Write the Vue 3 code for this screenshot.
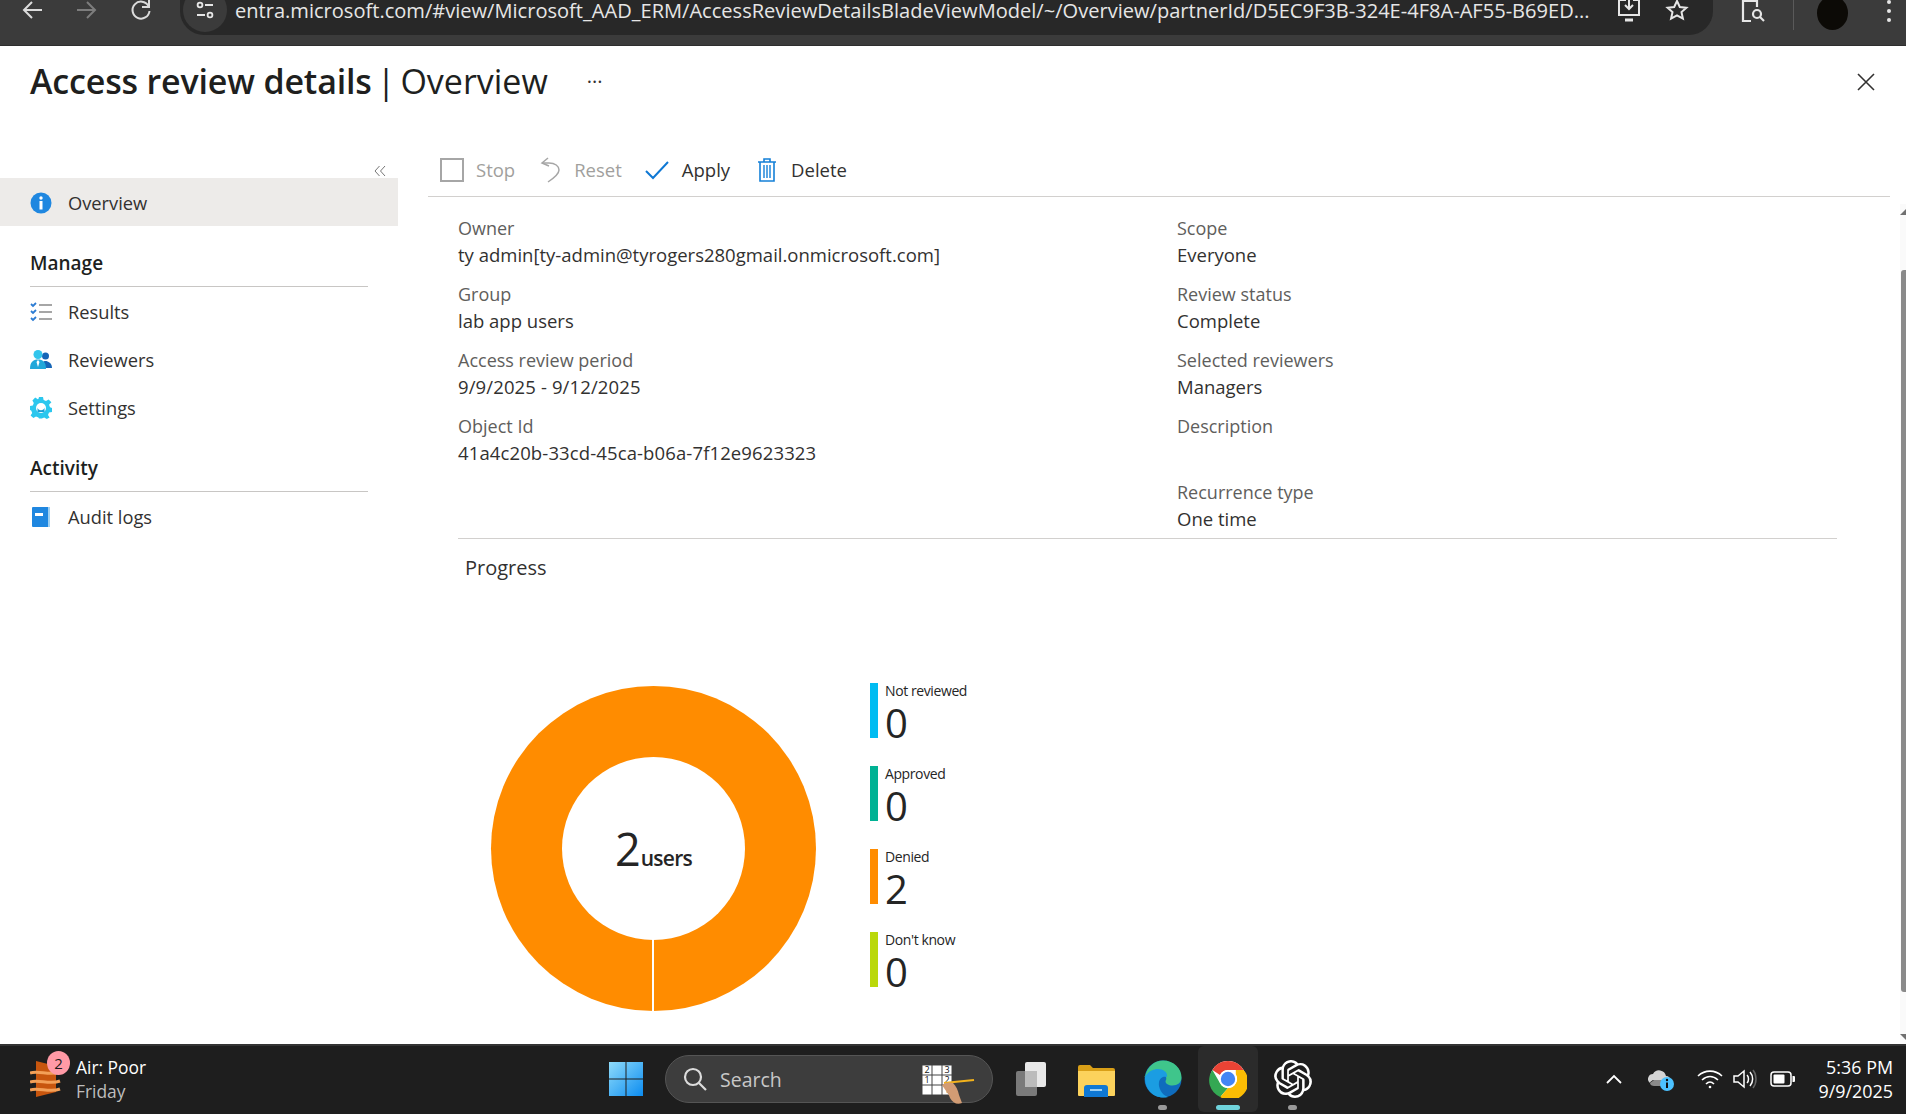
<script setup>
const leftDetails = [
  { label: "Owner", value: "ty admin[ty-admin@tyrogers280gmail.onmicrosoft.com]" },
  { label: "Group", value: "lab app users" },
  { label: "Access review period", value: "9/9/2025 - 9/12/2025", digits: true },
  { label: "Object Id", value: "41a4c20b-33cd-45ca-b06a-7f12e9623323", digits: true },
];
const rightDetails = [
  { label: "Scope", value: "Everyone" },
  { label: "Review status", value: "Complete" },
  { label: "Selected reviewers", value: "Managers" },
  { label: "Description", value: "" },
  { label: "Recurrence type", value: "One time" },
];
const legend = [
  { label: "Not reviewed", value: 0, color: "#00bcf2" },
  { label: "Approved", value: 0, color: "#00b294" },
  { label: "Denied", value: 2, color: "#ff8c00" },
  { label: "Don't know", value: 0, color: "#bad80a" },
];
</script>

<template>
  <div class="page">
    <!-- browser toolbar -->
    <div class="chrome">
      <div class="chrome-row">
        <svg class="nav nav-back" width="24" height="24" viewBox="0 0 24 24" fill="none" stroke="#dcdcdc" stroke-width="2"><path d="M21 12H4M11 4l-8 8 8 8" /></svg>
        <svg class="nav nav-fwd" width="24" height="24" viewBox="0 0 24 24" fill="none" stroke="#7d7d7d" stroke-width="2"><path d="M3 12h17M13 4l8 8-8 8" /></svg>
        <svg class="nav nav-reload" width="24" height="24" viewBox="0 0 24 24" fill="none" stroke="#dcdcdc" stroke-width="2"><path d="M19.5 8A8.5 8.5 0 1 0 20.5 13" /><path d="M20 2v7h-7" /></svg>
        <div class="url-pill">
          <span class="tune">
            <svg width="22" height="22" viewBox="0 0 22 22" fill="none" stroke="#e6e6e6" stroke-width="1.8"><circle cx="6" cy="6" r="2.4" /><path d="M11 6h8M3 16h8" /><circle cx="16" cy="16" r="2.4" /></svg>
          </span>
          <span class="url">entra.microsoft.com/#view/Microsoft_AAD_ERM/AccessReviewDetailsBladeViewModel/~/Overview/partnerId/D5EC9F3B-324E-4F8A-AF55-B69ED...</span>
          <svg class="pill-cast" width="26" height="26" viewBox="0 0 26 26" fill="none" stroke="#e6e6e6" stroke-width="2"><path d="M10 3H3v15h20V3h-6M13 1v10M9 8l4 4 4-4" /><path d="M9 23h8" stroke-width="3" /></svg>
          <svg class="pill-star" width="24" height="24" viewBox="0 0 24 24" fill="none" stroke="#e6e6e6" stroke-width="2"><path d="M12 3l2.8 6 6.6.7-4.9 4.4 1.4 6.5L12 17.3l-5.900 3.300 1.400-6.500L2.600 9.700l6.600-.7z" /></svg>
        </div>
        <svg class="lens" width="28" height="28" viewBox="0 0 28 28" fill="none" stroke="#e6e6e6" stroke-width="2.200"><path d="M4 2v22h8M4 4h14v6" /><circle cx="18" cy="17" r="4" /><path d="M21 20l4 4" /></svg>
        <span class="chrome-sep"></span>
        <span class="avatar"></span>
        <span class="dots"><i></i><i></i><i></i></span>
      </div>
    </div>

    <div class="blade">
      <div class="blade-head">
        <h1 class="title"><b>Access review details</b><span class="pipe">|</span>Overview</h1>
        <span class="more">···</span>
        <svg class="close" width="20" height="20" viewBox="0 0 20 20" fill="none" stroke="#323130" stroke-width="1.600"><path d="M2 2l16 16M18 2L2 18" /></svg>
      </div>

      <div class="blade-body">
        <aside class="side">
          <div class="collapse">
            <svg width="14" height="14" viewBox="0 0 14 14" fill="none" stroke="#777" stroke-width="1"><path d="M6.500 2L2 7l4.500 5M12 2L7.500 7l4.500 5" /></svg>
          </div>
          <div class="nav-item active">
            <svg width="22" height="22" viewBox="0 0 22 22"><circle cx="11" cy="11" r="10.500" fill="#1f87e0" /><circle cx="11" cy="6" r="1.700" fill="#fff" /><rect x="9.500" y="9" width="3" height="8.500" fill="#fff" /></svg>
            <span>Overview</span>
          </div>

          <div class="group-title">Manage</div>
          <div class="nav-item">
            <svg width="22" height="22" viewBox="0 0 22 22" fill="none"><path d="M1 3l2 2 3-3M1 10l2 2 3-3M1 17l2 2 3-3" stroke="#2c7cd3" stroke-width="1.800" /><path d="M9 4h13M9 11h13M9 18h13" stroke="#a6a6a6" stroke-width="2" /></svg>
            <span>Results</span>
          </div>
          <div class="nav-item">
            <svg width="22" height="22" viewBox="0 0 22 22"><circle cx="15.500" cy="7" r="3.500" fill="#1565b7" /><path d="M11 19c0-5 2-7 4.500-7S22 14 22 19z" fill="#1565b7" /><circle cx="8" cy="5.500" r="4.500" fill="#32c5ec" /><path d="M0 20c0-7 3-9.500 8-9.500s8 2.500 8 9.500z" fill="#20a7da" /><path d="M8 11l-1.500 2L8 18l1.500-5z" fill="#fff" /></svg>
            <span>Reviewers</span>
          </div>
          <div class="nav-item">
            <svg width="22" height="22" viewBox="0 0 22 22"><path d="M9 0h4l.6 3 2.400 1 2.600-1.600 2.800 2.800L19 7.800l1 2.400 2 .8v4l-3 .6-1 2.400 1.600 2.600-2.800 1.400-2.600-1.600-2.400 1H9l-.6-1-2.400-1-2.600 1.600L.6 18.600 2.200 16l-1-2.400L0 13V9l2.800-.6 1-2.400L2.400 3.400 5.200.600 7.800 2.200 8.400 2z" fill="#2bc7ee" /><circle cx="11" cy="11" r="5" fill="#fff" /><path d="M7.500 10.500a3.600 3.600 0 0 0 7 0V15h-7z" fill="#1d9fd6" /></svg>
            <span>Settings</span>
          </div>

          <div class="group-title activity">Activity</div>
          <div class="nav-item">
            <svg width="22" height="22" viewBox="0 0 22 22"><rect x="2" y="1" width="18" height="20" rx="1" fill="#1f87e0" /><rect x="18" y="1" width="2" height="20" fill="#9fd0f2" /><rect x="5" y="7" width="8" height="3" fill="#fff" /></svg>
            <span>Audit logs</span>
          </div>
        </aside>

        <main class="content">
          <div class="toolbar">
            <button class="tool off">
              <span class="stop-box"></span>
              <span>Stop</span>
            </button>
            <button class="tool off reset">
              <svg width="24" height="28" viewBox="0 0 24 28" fill="none" stroke="#a6a6a6" stroke-width="1.500"><path d="M9 2L3 7l7 3" /><path d="M3 7h7c6 0 10 3 10 7s-5 8-11 12" /></svg>
              <span>Reset</span>
            </button>
            <button class="tool apply">
              <svg width="26" height="22" viewBox="0 0 26 22" fill="none" stroke="#0f78d4" stroke-width="2"><path d="M2 12l7 7L24 3" /></svg>
              <span>Apply</span>
            </button>
            <button class="tool delete">
              <svg width="20" height="26" viewBox="0 0 20 26" fill="none" stroke="#1480d8" stroke-width="1.600"><path d="M1 5h18M7 5V2h6v3M3 5v19h14V5" /><path d="M7 8v13M10 8v13M13 8v13" stroke-width="1.400" /></svg>
              <span>Delete</span>
            </button>
          </div>

          <div class="details">
            <div class="col">
              <div v-for="d in leftDetails" :key="d.label" class="field">
                <div class="label">{{ d.label }}</div>
                <div :class="['value', { digits: d.digits }]">{{ d.value }}</div>
              </div>
            </div>
            <div class="col">
              <div v-for="d in rightDetails" :key="d.label" class="field">
                <div class="label">{{ d.label }}</div>
                <div class="value">{{ d.value }}</div>
              </div>
            </div>
          </div>

          <div class="progress-title">Progress</div>

          <div class="chart-row">
            <div class="donut">
              <span class="gap-line"></span>
              <div class="hole">
                <div class="count"><span class="num">2</span><span class="unit">users</span></div>
              </div>
            </div>
            <div class="legend">
              <div v-for="l in legend" :key="l.label" class="legend-item">
                <span class="bar" :style="{ background: l.color }"></span>
                <div>
                  <div class="l-label">{{ l.label }}</div>
                  <div class="l-value">{{ l.value }}</div>
                </div>
              </div>
            </div>
          </div>
        </main>
      </div>

      <div class="scrollbar">
        <span class="arrow up"></span>
        <span class="thumb"></span>
        <span class="arrow down"></span>
      </div>
    </div>

    <!-- windows taskbar -->
    <footer class="taskbar">
      <div class="weather">
        <span class="weather-icon">
          <svg width="34" height="40" viewBox="0 0 34 40"><path d="M6 2l20 5v26L6 38z" fill="#c8560e" /><path d="M0 14c8-3 20 3 30-1M0 23c8-3 20 3 30-1M0 31c8-3 20 3 30-1" fill="none" stroke="#f3a058" stroke-width="3" /></svg>
          <span class="badge">2</span>
        </span>
        <div class="weather-text">
          <div>Air: Poor</div>
          <div class="dim">Friday</div>
        </div>
      </div>

      <svg class="win" width="36" height="36" viewBox="0 0 36 36">
        <defs>
          <linearGradient id="winG" x1="0" y1="0" x2="1" y2="1"><stop offset="0" stop-color="#8fdcfb" /><stop offset="1" stop-color="#0c8cf0" /></linearGradient>
        </defs>
        <path d="M1 1h16.500v16.500H1zM18.500 1H35v16.500H18.500zM1 18.500h16.500V35H1zM18.500 18.500H35V35H18.500z" fill="url(#winG)" />
      </svg>

      <div class="search">
        <svg width="26" height="26" viewBox="0 0 26 26" fill="none" stroke="#dcdcdc" stroke-width="2.200"><circle cx="11" cy="11" r="8" /><path d="M17 17l7 7" /></svg>
        <span class="search-text">Search</span>
        <div class="sudoku">
          <span>2</span><span></span><span>3</span>
          <span>1</span><span></span><span>2</span>
          <span></span><span></span><span>1</span>
          <svg class="hand" width="40" height="34" viewBox="0 0 40 34"><path d="M8 8l30-3" stroke="#f2b21c" stroke-width="2.200" /><path d="M6 10c4-3 8-3 11-2 3 3 5 7 6 12l3 8c-5 2-9 0-12-5-1-4-5-8-8-13z" fill="#d29c74" /></svg>
        </div>
      </div>

      <div class="apps">
        <div class="app shift-left">
          <svg width="30" height="36" viewBox="0 0 30 36"><rect x="9" y="1" width="21" height="25" rx="2" fill="#e8e8e8" /><rect x="0" y="10" width="21" height="25" rx="2" fill="#7a7a7a" /><rect x="9" y="10" width="12" height="16" fill="#bbb" /></svg>
        </div>
        <div class="app shift-left">
          <svg width="38" height="36" viewBox="0 0 38 36"><path d="M1 6a2 2 0 0 1 2-2h10l3 3h20a2 2 0 0 1 2 2v6H1z" fill="#d99f17" /><path d="M1 10h37v24a1 1 0 0 1-1 1H2a1 1 0 0 1-1-1z" fill="#fcd25c" /><path d="M7 36v-9a3 3 0 0 1 3-3h18a3 3 0 0 1 3 3v9z" fill="#0f78d4" /><path d="M13 29h12" stroke="#9cd0f5" stroke-width="2" /></svg>
        </div>
        <div class="app">
          <svg width="38" height="38" viewBox="0 0 38 38"><circle cx="19" cy="19" r="18.500" fill="#0f6cbd" /><path d="M1 17C3 6 11 .500 19 .500c11 0 18.500 8 18.500 17 0 5-4 8-9 8-4 0-7-2-7-4 0-1 .800-1.500.800-3 0-3-4-5-7-5-7 0-14 3-15.500 3.500z" fill="#3fc58b" /><path d="M1 17c3-6 9-8 13-8 5 0 10 3 9 8-3-1-7 0-8 5-1 6 3 13 9 15-1 .500-3 .500-5 .500C9 37.500.500 29 1 17z" fill="#1b9de2" /></svg>
          <span class="pip"></span>
        </div>
        <div class="app current">
          <svg width="38" height="38" viewBox="0 0 38 38"><circle cx="19" cy="19" r="18" fill="#fff" /><path d="M3.400 10a18 18 0 0 1 31.200 0H19a9 9 0 0 0-8 5z" fill="#ea4335" /><path d="M3.400 10L11.200 23.500a9 9 0 0 0 7.800 4.500L11.200 37A18 18 0 0 1 3.400 10z" fill="#34a853" /><path d="M34.600 10a18 18 0 0 1-23.400 27L19 28a9 9 0 0 0 7.800-13.500L26.800 10z" fill="#fbbc04" /><circle cx="19" cy="19" r="9" fill="#fff" /><circle cx="19" cy="19" r="7.200" fill="#4285f4" /></svg>
          <span class="pip wide"></span>
        </div>
        <div class="app">
          <svg width="38" height="38" viewBox="0 0 24 24" fill="#fff"><path d="M22.2819 9.8211a5.9847 5.9847 0 0 0-.5157-4.9108 6.0462 6.0462 0 0 0-6.5098-2.9A6.0651 6.0651 0 0 0 4.9807 4.1818a5.9847 5.9847 0 0 0-3.9977 2.9 6.0462 6.0462 0 0 0 .7427 7.0966 5.98 5.98 0 0 0 .511 4.9107 6.051 6.051 0 0 0 6.5146 2.9001A5.9847 5.9847 0 0 0 13.2599 24a6.0557 6.0557 0 0 0 5.7718-4.2058 5.9894 5.9894 0 0 0 3.9977-2.9001 6.0557 6.0557 0 0 0-.7475-7.0729zm-9.022 12.6081a4.4755 4.4755 0 0 1-2.8764-1.0408l.1419-.0804 4.7783-2.7582a.7948.7948 0 0 0 .3927-.6813v-6.7369l2.02 1.1686a.071.071 0 0 1 .038.052v5.5826a4.504 4.504 0 0 1-4.4945 4.4944zm-9.6607-4.1254a4.4708 4.4708 0 0 1-.5346-3.0137l.142.0852 4.783 2.7582a.7712.7712 0 0 0 .7806 0l5.8428-3.3685v2.3324a.0804.0804 0 0 1-.0332.0615L9.74 19.9502a4.4992 4.4992 0 0 1-6.1408-1.6464zM2.3408 7.8956a4.485 4.485 0 0 1 2.3655-1.9728V11.6a.7664.7664 0 0 0 .3879.6765l5.8144 3.3543-2.0201 1.1685a.0757.0757 0 0 1-.071 0l-4.8303-2.7865A4.504 4.504 0 0 1 2.3408 7.872zm16.5963 3.8558L13.1038 8.364 15.1192 7.2a.0757.0757 0 0 1 .071 0l4.8303 2.7913a4.4944 4.4944 0 0 1-.6765 8.1042v-5.6772a.79.79 0 0 0-.407-.667zm2.0107-3.0231l-.142-.0852-4.7735-2.7818a.7759.7759 0 0 0-.7854 0L9.409 9.2297V6.8974a.0662.0662 0 0 1 .0284-.0615l4.8303-2.7866a4.4992 4.4992 0 0 1 6.6802 4.66zM8.3065 12.863l-2.02-1.1638a.0804.0804 0 0 1-.038-.0567V6.0742a4.4992 4.4992 0 0 1 7.3757-3.4537l-.142.0805L8.704 5.459a.7948.7948 0 0 0-.3927.6813zm1.0976-2.3654l2.602-1.4998 2.6069 1.4998v2.9994l-2.5974 1.4997-2.6067-1.4997Z" /></svg>
          <span class="pip"></span>
        </div>
      </div>

      <div class="tray">
        <svg class="t-chev" width="18" height="12" viewBox="0 0 18 12" fill="none" stroke="#fff" stroke-width="1.800"><path d="M2 10l7-7 7 7" /></svg>
        <svg class="t-cloud" width="26" height="24" viewBox="0 0 26 24"><path d="M2 16a5 5 0 0 1 3-9 7 7 0 0 1 13 2c3 0 4 2 4 4H6c-2 0-4 2-4 3z" fill="#d4d4d4" /><path d="M2 16c0 2 2 3 4 3h12l2-6H6z" fill="#8a8a8a" /><circle cx="19" cy="17" r="7" fill="#4cc2ff" /><rect x="18" y="15.500" width="2" height="5.500" fill="#111" /><circle cx="19" cy="13" r="1.200" fill="#111" /></svg>
        <svg class="t-wifi" width="26" height="20" viewBox="0 0 26 20" fill="none" stroke="#fff" stroke-width="1.600"><path d="M1 7c7-6.500 17-6.500 24 0M5 11c5-4.500 11-4.500 16 0M9 15c2.500-2.500 5.500-2.500 8 0" /><circle cx="13" cy="18" r="1.300" fill="#fff" stroke="none" /></svg>
        <svg class="t-vol" width="26" height="22" viewBox="0 0 26 22" fill="none" stroke="#fff" stroke-width="1.500"><path d="M2 8v6h4l6 5V3L6 8z" /><path d="M15 7c2 2 2 6 0 8M18 4c3.500 4 3.500 10 0 14" /><path d="M21 2c4 5 4 13 0 18" stroke="#666" /></svg>
        <svg class="t-batt" width="26" height="16" viewBox="0 0 26 16" fill="none"><rect x="1" y="1" width="20" height="14" rx="3" stroke="#fff" stroke-width="1.500" /><rect x="3.500" y="3.500" width="11" height="9" rx="1" fill="#fff" /><path d="M22.500 5h1.500a1 1 0 0 1 1 1v4a1 1 0 0 1-1 1h-1.500z" fill="#fff" /></svg>
        <div class="clock">
          <div>5:36 PM</div>
          <div>9/9/2025</div>
        </div>
      </div>
    </footer>
  </div>
</template>

<style>
html,
body {
  margin: 0;
  background: #fff;
}
</style>

<style scoped>
.page {
  width: 1906px;
  height: 1114px;
  display: flex;
  flex-direction: column;
  overflow: hidden;
  font-family: "Open Sans", "Noto Sans", sans-serif;
  color: #323130;
}

/* browser toolbar */
.chrome {
  height: 46px;
  flex: none;
  background: #3b3b3b;
  border-bottom: 1px solid #2e2e2e;
  box-sizing: border-box;
  overflow: hidden;
}
.chrome-row {
  display: flex;
  align-items: center;
  height: 45px;
  margin-top: -10px;
}
.nav {
  flex: none;
  margin-top: -5px;
}
.nav-back {
  margin-left: 21px;
}
.nav-fwd {
  margin-left: 29px;
}
.nav-reload {
  margin-left: 31px;
}
.url-pill {
  margin-left: 27px;
  width: 1533px;
  height: 45px;
  flex: none;
  background: #282828;
  border-radius: 0 0 24px 24px;
  display: flex;
  align-items: center;
  position: relative;
}
.tune {
  width: 44px;
  height: 44px;
  margin-left: 3px;
  border-radius: 50%;
  background: #3b3b3b;
  display: flex;
  align-items: center;
  justify-content: center;
  margin-top: -5px;
  flex: none;
}
.url {
  margin-left: 8px;
  margin-top: -5px;
  color: #e6e6e6;
  font-size: 20.07px;
  white-space: nowrap;
}
.pill-cast {
  position: absolute;
  left: 1436px;
  top: 7px;
}
.pill-star {
  position: absolute;
  left: 1485px;
  top: 8px;
}
.lens {
  margin-left: 26px;
  margin-top: -3px;
  flex: none;
}
.chrome-sep {
  width: 1px;
  height: 34px;
  background: #5a5a5a;
  margin-left: 26px;
  flex: none;
}
.avatar {
  width: 31px;
  height: 34px;
  margin-left: 23px;
  border-radius: 50%;
  background: #0c0a06;
  flex: none;
}
.dots {
  display: flex;
  flex-direction: column;
  gap: 5px;
  margin-left: 39px;
  flex: none;
  margin-top: -4px;
}
.dots i {
  width: 4px;
  height: 4px;
  border-radius: 50%;
  background: #e6e6e6;
}

/* blade */
.blade {
  flex: 1;
  min-height: 0;
  background: #fff;
  position: relative;
  display: flex;
  flex-direction: column;
}
.blade-head {
  height: 104px;
  flex: none;
  display: flex;
  align-items: flex-start;
  padding-left: 30px;
  position: relative;
}
.title {
  margin: 10px 0 0;
  font-size: 34px;
  line-height: 50px;
  font-weight: 400;
  color: #201f1e;
  white-space: nowrap;
}
.title b {
  font-weight: 600;
  letter-spacing: -0.17px;
}
.pipe {
  color: #201f1e;
  margin: 0 5px;
}
.more {
  margin: 21px 0 0 39px;
  font-size: 20px;
  line-height: 30px;
  color: #323130;
}
.close {
  position: absolute;
  left: 1856px;
  top: 26px;
}
.blade-body {
  flex: 1;
  min-height: 0;
  display: flex;
}

/* left menu */
.side {
  width: 398px;
  flex: none;
}
.collapse {
  height: 28px;
  display: flex;
  justify-content: flex-end;
  align-items: flex-end;
  padding-right: 11px;
  box-sizing: border-box;
}
.nav-item {
  height: 48px;
  box-sizing: border-box;
  padding-top: 1px;
  display: flex;
  align-items: center;
  gap: 16px;
  padding-left: 30px;
  font-size: 18.3px;
  color: #323130;
}
.nav-item.active {
  background: #edebe9;
}
.group-title {
  margin: 17px 30px 0;
  height: 44px;
  box-sizing: border-box;
  border-bottom: 1px solid #c8c6c4;
  font-size: 19px;
  font-weight: 600;
  line-height: 40px;
  color: #201f1e;
}
.group-title.activity {
  margin-top: 17px;
}

/* content */
.content {
  flex: 1;
  min-width: 0;
  margin-left: 30px;
  margin-right: 16px;
}
.toolbar {
  height: 47px;
  box-sizing: border-box;
  padding-bottom: 7px;
  border-bottom: 1px solid #d2d0ce;
  display: flex;
  align-items: center;
  padding-left: 12px;
}
.tool {
  display: flex;
  align-items: center;
  border: 0;
  background: none;
  padding: 0;
  font: inherit;
  font-size: 18.5px;
  color: #323130;
}
.tool.off {
  color: #a19f9d;
}
.stop-box {
  width: 24px;
  height: 24px;
  box-sizing: border-box;
  border: 2px solid #a6a6a6;
  margin-right: 12px;
}
.reset {
  margin-left: 24px;
  gap: 11px;
}
.apply {
  margin-left: 22px;
  gap: 12px;
}
.delete {
  margin-left: 27px;
  gap: 14px;
}
.details {
  margin-left: 30px;
  margin-right: 53px;
  padding-top: 18px;
  padding-bottom: 3px;
  border-bottom: 1px solid #d2d0ce;
  display: flex;
}
.col {
  width: 719px;
  flex: none;
}
.field {
  height: 66px;
  font-size: 18px;
  line-height: 27px;
}
.field:nth-child(5) {
  height: 56px;
}
.label {
  color: #605e5c;
}
.value {
  color: #323130;
  font-size: 18.5px;
  margin-top: -1px;
}
.value.digits {
  letter-spacing: 0.12px;
}
.progress-title {
  margin: 14px 0 0 37px;
  font-size: 20px;
  line-height: 30px;
  color: #323130;
}

/* donut */
.chart-row {
  display: flex;
  margin-top: 100px;
  margin-left: 63px;
}
.donut {
  width: 325px;
  height: 325px;
  flex: none;
  margin-top: 3px;
  border-radius: 50%;
  background: #ff8c00;
  display: flex;
  align-items: center;
  justify-content: center;
  position: relative;
}
.gap-line {
  position: absolute;
  left: 160.5px;
  top: 240px;
  width: 2px;
  height: 85px;
  background: #fff;
}
.hole {
  width: 183px;
  height: 183px;
  border-radius: 50%;
  background: #fff;
  display: flex;
  align-items: center;
  justify-content: center;
  color: #252525;
  position: relative;
}
.count {
  display: flex;
  align-items: baseline;
  line-height: 1.2;
}
.num {
  font-size: 45px;
  font-weight: 500;
}
.unit {
  font-size: 21px;
  font-weight: 600;
  letter-spacing: -0.7px;
}
.legend {
  margin-left: 54px;
  display: flex;
  flex-direction: column;
  gap: 28px;
}
.legend-item {
  height: 55px;
  display: flex;
  gap: 7px;
}
.bar {
  width: 8px;
  height: 55px;
  flex: none;
}
.l-label {
  font-size: 14px;
  line-height: 16px;
  color: #252525;
  letter-spacing: -0.4px;
}
.l-value {
  font-size: 40px;
  font-weight: 500;
  line-height: 48px;
  color: #252525;
}

/* scrollbar */
.scrollbar {
  position: absolute;
  right: 0;
  top: 158px;
  bottom: 0;
  width: 6px;
  background: #fafafa;
}
.thumb {
  position: absolute;
  left: 1px;
  right: 0;
  top: 66px;
  bottom: 52px;
  background: #8a8a8a;
  border-radius: 3px 0 0 3px;
}
.arrow {
  position: absolute;
  left: 0;
  width: 0;
  height: 0;
  border-left: 6px solid transparent;
}
.arrow.up {
  top: 0;
  margin-top: 5px;
  border-bottom: 6px solid #707070;
}
.arrow.down {
  bottom: 4px;
  border-top: 6px solid #707070;
}

/* taskbar */
.taskbar {
  height: 70px;
  flex: none;
  background: #1e1e1e;
  border-top: 2px solid #333;
  box-sizing: border-box;
  padding-bottom: 2px;
  display: flex;
  align-items: center;
  color: #fff;
}
.weather {
  width: 608px;
  flex: none;
  display: flex;
  align-items: center;
  padding-left: 30px;
  box-sizing: border-box;
  gap: 12px;
}
.weather-icon {
  position: relative;
  width: 34px;
  height: 40px;
  display: block;
}
.badge {
  position: absolute;
  left: 17px;
  top: -8px;
  width: 23px;
  height: 24px;
  border-radius: 50%;
  background: #ff9aa6;
  color: #1a1a1a;
  font-size: 15px;
  line-height: 24px;
  text-align: center;
}
.weather-text {
  font-size: 17.4px;
  line-height: 24px;
}
.dim {
  color: #bdbdbd;
}
.win {
  flex: none;
}
.search {
  width: 328px;
  height: 48px;
  margin-left: 21px;
  flex: none;
  box-sizing: border-box;
  border: 1px solid #555;
  border-radius: 24px;
  background: #3d3d3d;
  display: flex;
  align-items: center;
  padding-left: 16px;
  position: relative;
}
.search-text {
  margin-left: 12px;
  font-size: 19.5px;
  color: #c8c8c8;
}
.sudoku {
  position: absolute;
  left: 256px;
  top: 9px;
  width: 30px;
  height: 30px;
  background: #fff;
  display: grid;
  grid-template-columns: repeat(3, 10px);
  grid-auto-rows: 10px;
  font-size: 9px;
  line-height: 10px;
  text-align: center;
  color: #111;
}
.sudoku span {
  box-shadow: inset 0 0 0 0.5px #444;
}
.hand {
  position: absolute;
  left: 14px;
  top: 10px;
}
.apps {
  display: flex;
  margin-left: 7px;
  flex: none;
}
.app {
  width: 65px;
  height: 66px;
  box-sizing: border-box;
  display: flex;
  align-items: center;
  justify-content: center;
  position: relative;
}
.app.shift-left {
  padding-right: 4px;
}
.app.current {
  width: 60px;
  margin: 0 2.5px;
  background: #2b2b2b;
  border-radius: 6px;
}
.pip {
  position: absolute;
  left: 50%;
  bottom: 2px;
  width: 9px;
  height: 5px;
  margin-left: -4.5px;
  border-radius: 3px;
  background: #9a9a9a;
}
.pip.wide {
  width: 24px;
  margin-left: -12px;
  background: #6fd3dc;
}
.tray {
  margin-left: auto;
  padding-right: 13px;
  display: flex;
  align-items: center;
}
.t-cloud {
  margin-left: 25px;
}
.t-wifi {
  margin-left: 23px;
}
.t-vol {
  margin-left: 9px;
}
.t-batt {
  margin-left: 12px;
}
.clock {
  margin-left: 23px;
  text-align: right;
  font-size: 17.9px;
  line-height: 24px;
}
</style>
